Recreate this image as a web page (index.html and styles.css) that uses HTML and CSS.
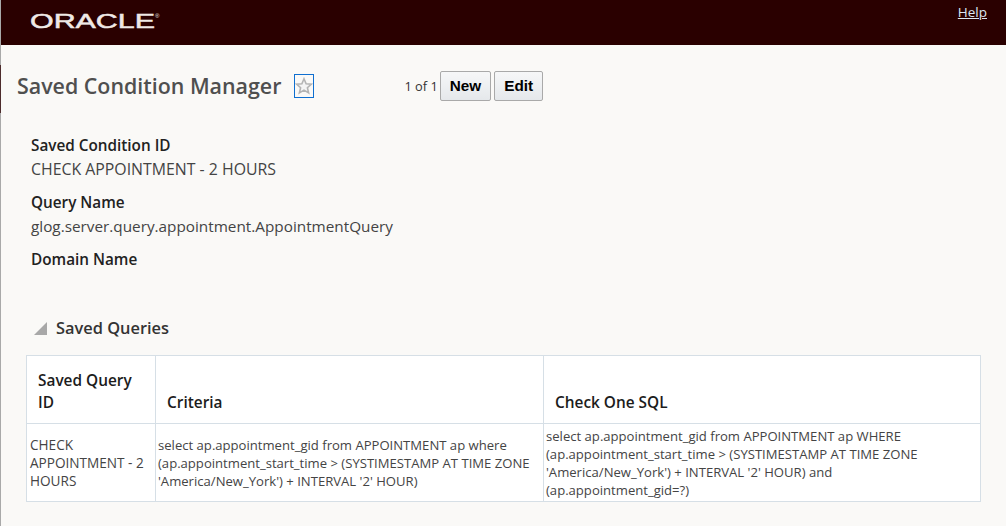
FILE: index.html
```html
<!DOCTYPE html>
<html lang="en">
<head>
<meta charset="utf-8">
<title>Saved Condition Manager</title>
<link rel="stylesheet" href="styles.css">
</head>
<body>
<div class="page">
  <header class="topbar">
    <svg class="logo" width="140" height="28" viewBox="0 0 140 28" role="img" aria-label="Oracle">
      <text class="logo-text" x="0" y="17" textLength="125" lengthAdjust="spacingAndGlyphs">ORACLE</text>
      <text class="logo-reg" x="125" y="7">®</text>
    </svg>
    <a class="help" href="#">Help</a>
  </header>
  <main class="content">
    <div class="title-row">
      <h1 class="title">Saved Condition Manager</h1>
      <span class="fav">
        <svg width="18" height="18" viewBox="0 0 18 18"><path d="M9 1.800l2.100 5 5.300.4-4 3.500 1.200 5.200L9 13.100l-4.600 2.800 1.200-5.200-4-3.500 5.300-.4z" fill="#f4f4f4" stroke="#b4b4b4" stroke-width="1.600"/></svg>
      </span>
      <span class="pager">1 of 1</span>
      <button class="btn">New</button>
      <button class="btn">Edit</button>
    </div>
    <dl class="fields">
      <dt>Saved Condition ID</dt>
      <dd class="caps">CHECK APPOINTMENT - 2 HOURS</dd>
      <dt>Query Name</dt>
      <dd>glog.server.query.appointment.AppointmentQuery</dd>
      <dt>Domain Name</dt>
      <dd></dd>
    </dl>
    <div class="section">
      <span class="disclosure"></span>
      <h2 class="section-title">Saved Queries</h2>
    </div>
    <table class="grid">
      <colgroup><col class="c1"><col class="c2"><col class="c3"></colgroup>
      <thead>
        <tr><th>Saved Query ID</th><th>Criteria</th><th>Check One SQL</th></tr>
      </thead>
      <tbody>
        <tr>
          <td class="caps-cell">CHECK APPOINTMENT - 2 HOURS</td>
          <td>select ap.appointment_gid from APPOINTMENT ap where (ap.appointment_start_time &gt; (SYSTIMESTAMP AT TIME ZONE 'America/New_York') + INTERVAL '2' HOUR)</td>
          <td class="wide">select ap.appointment_gid from APPOINTMENT ap WHERE (ap.appointment_start_time &gt; (SYSTIMESTAMP AT TIME ZONE 'America/New_York') + INTERVAL '2' HOUR) and (ap.appointment_gid=?)</td>
        </tr>
      </tbody>
    </table>
  </main>
</div>
</body>
</html>
```
FILE: styles.css
```css
html, body { margin: 0; padding: 0; height: 100%; overflow: hidden; }
body { font-family: "Open Sans", "Noto Sans", sans-serif; color: #333; background: #faf9f7; }
.page { height: 526px; border-left: 1px solid #a9a9a9; box-sizing: border-box; }
.topbar { height: 45px; background: #2a0000; display: flex; justify-content: space-between; align-items: flex-start; }
.logo { margin: 11px 0 0 29px; overflow: visible; }
.logo-text { font-family: "Liberation Sans", sans-serif; font-size: 21px; fill: #efe9e6; stroke: #efe9e6; stroke-width: .5px; }
.logo-reg { font-family: "Liberation Sans", sans-serif; font-size: 6px; fill: #efe9e6; }
.help { margin: 3px 19px 0 0; font: 13.5px "Open Sans", sans-serif; color: #dce6f2; }
.content { padding: 0; }
.title-row { display: flex; align-items: center; box-sizing: border-box; height: 48px; margin: 20px 0 0 -1px; padding: 0 0 6px 16px; border-left: 1px solid #4d2c2c; }
.title { margin: 0 0 2px; font-size: 21.4px; font-weight: 600; color: #4f4f4f; white-space: nowrap; }
.fav { width: 20px; height: 24px; margin-left: 13px; border: 1px solid #0f6fd0; box-sizing: border-box; display: flex; align-items: center; justify-content: center; }
.pager { margin-left: 90px; font-size: 12.8px; font-weight: 500; }
.btn { margin-left: 3px; height: 30px; padding: 0 9px; font: bold 15.300px "Liberation Sans", sans-serif; color: #000; background: linear-gradient(#f6f7f8, #e5e8eb); border: 1px solid #a9a9a9; border-radius: 2px; }
.pager + .btn { margin-left: 2px; }
.fields { margin: 20px 0 0 30px; }
.fields dt { font-size: 15.3px; font-weight: 600; color: #222; line-height: 24px; height: 24px; }
.fields dd { margin: 0 0 9px; font-size: 15.3px; line-height: 24px; height: 24px; color: #444; }
.fields dd.caps { font-size: 15.85px; }
.section { display: flex; align-items: center; margin: 18px 0 0 33px; height: 28px; }
.disclosure { width: 0; height: 0; border-style: solid; border-width: 0 0 13px 13px; border-color: transparent transparent #a8a8a8 transparent; margin-top: 3px; }
.section-title { margin: 0 0 0 9px; font-size: 16.4px; font-weight: 600; color: #333; }
.grid { margin: 14px 0 0 25px; width: 955px; border-collapse: collapse; table-layout: fixed; background: #fff; }
.c1 { width: 129px; } .c2 { width: 388px; }
.grid th, .grid td { border: 1px solid #d6dfe6; }
.grid th { height: 58px; vertical-align: bottom; text-align: left; font-size: 15.4px; font-weight: 600; color: #1c1c1c; padding: 0 11px 9px; line-height: 22px; }
.grid td { height: 77px; padding: 0 2px; font-size: 13.1px; line-height: 18px; color: #444; vertical-align: middle; }
.grid td.caps-cell { font-size: 13.6px; padding-left: 3px; }
.grid td.wide { padding-right: 30px; }
```
